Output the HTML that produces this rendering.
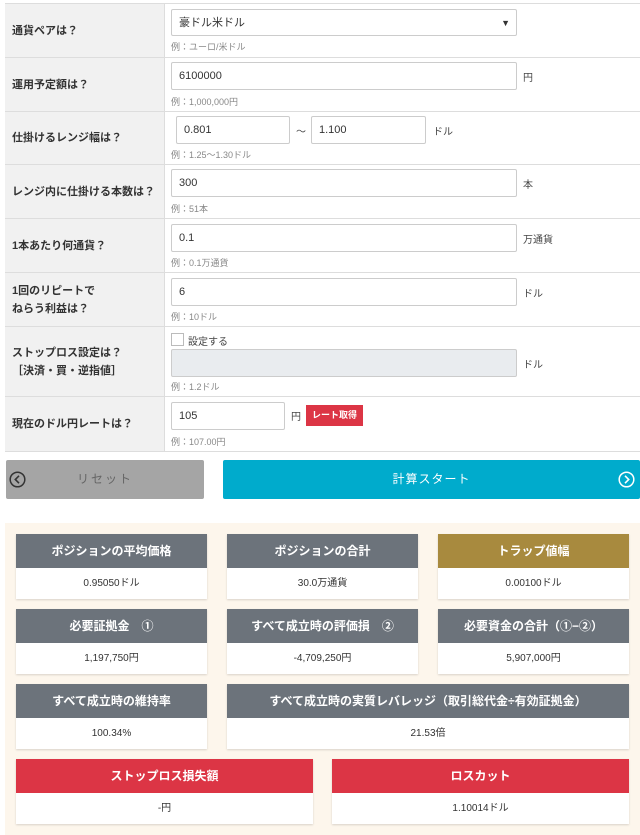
<!DOCTYPE html>
<html><head><meta charset="utf-8"><style>
*{box-sizing:border-box;margin:0;padding:0}
body{width:640px;height:835px;background:#fff;font-family:"Liberation Sans","Noto Sans CJK JP",sans-serif;color:#333;position:relative;overflow:hidden}
.a{position:absolute}
.lab{position:absolute;left:5px;width:159px;background:#f1f1f1;border-bottom:1px solid #ddd;border-top:1px solid #ddd;font-size:11px;font-weight:bold;color:#333;display:flex;align-items:center;padding-left:7px;line-height:18px}
.cell{position:absolute;left:164px;width:476px;border-bottom:1px solid #ddd;border-top:1px solid #ddd;border-left:1px solid #ddd}
.in{position:absolute;height:28px;border:1px solid #ccc;background:#fff;font-size:11px;padding-left:7px;line-height:26px;color:#333;border-radius:2px}
.hint{position:absolute;font-size:9px;color:#888}
.unit{position:absolute;font-size:10px;color:#444}
.card{position:absolute;background:#fff;box-shadow:0 1px 2px rgba(0,0,0,.15)}
.card .h{height:34px;background:#6c737b;color:#fff;font-weight:bold;font-size:12px;text-align:center;line-height:34px}
.card .v{height:31px;text-align:center;font-size:10px;line-height:31px;color:#333}
</style></head><body>
<div class="lab" style="top:3px;height:55px">通貨ペアは？</div>
<div class="cell" style="top:3px;height:55px"><div class="in" style="left:6px;top:5px;width:346px;height:27px">豪ドル米ドル<span style="position:absolute;right:6px;font-size:9px">▼</span></div><div class="hint" style="left:6px;top:36px">例：ユーロ/米ドル</div></div>
<div class="lab" style="top:57px;height:55px">運用予定額は？</div>
<div class="cell" style="top:57px;height:55px"><div class="in" style="left:6px;top:4px;width:346px">6100000</div><div class="unit" style="left:358px;top:11px">円</div><div class="hint" style="left:6px;top:37px">例：1,000,000円</div></div>
<div class="lab" style="top:111px;height:54px">仕掛けるレンジ幅は？</div>
<div class="cell" style="top:111px;height:54px"><div class="in" style="left:11px;top:4px;width:114px">0.801</div><div class="unit" style="left:131px;top:11px">〜</div><div class="in" style="left:146px;top:4px;width:115px">1.100</div><div class="unit" style="left:268px;top:11px">ドル</div><div class="hint" style="left:6px;top:36px">例：1.25〜1.30ドル</div></div>
<div class="lab" style="top:164px;height:55px">レンジ内に仕掛ける本数は？</div>
<div class="cell" style="top:164px;height:55px"><div class="in" style="left:6px;top:4px;width:346px">300</div><div class="unit" style="left:358px;top:11px">本</div><div class="hint" style="left:6px;top:37px">例：51本</div></div>
<div class="lab" style="top:218px;height:55px">1本あたり何通貨？</div>
<div class="cell" style="top:218px;height:55px"><div class="in" style="left:6px;top:5px;width:346px">0.1</div><div class="unit" style="left:358px;top:12px">万通貨</div><div class="hint" style="left:6px;top:37px">例：0.1万通貨</div></div>
<div class="lab" style="top:272px;height:55px">1回のリピートで<br>ねらう利益は？</div>
<div class="cell" style="top:272px;height:55px"><div class="in" style="left:6px;top:5px;width:346px">6</div><div class="unit" style="left:358px;top:12px">ドル</div><div class="hint" style="left:6px;top:37px">例：10ドル</div></div>
<div class="lab" style="top:326px;height:71px">ストップロス設定は？<br>［決済・買・逆指値］</div>
<div class="cell" style="top:326px;height:71px"><div class="a" style="left:6px;top:6px;width:13px;height:13px;border:1px solid #bbb"></div><div class="unit" style="left:23px;top:6px;font-size:10px">設定する</div><div class="in" style="left:6px;top:22px;width:346px;background:#e9ecef;border-color:#ccc"></div><div class="unit" style="left:358px;top:29px">ドル</div><div class="hint" style="left:6px;top:53px">例：1.2ドル</div></div>
<div class="lab" style="top:396px;height:56px">現在のドル円レートは？</div>
<div class="cell" style="top:396px;height:56px"><div class="in" style="left:6px;top:5px;width:114px;height:28px">105</div><div class="unit" style="left:126px;top:11px">円</div><div class="a" style="left:141px;top:8px;width:57px;height:21px;background:#dc3545;color:#fff;font-size:9px;font-weight:bold;text-align:center;line-height:21px">レート取得</div><div class="hint" style="left:6px;top:38px">例：107.00円</div></div>

<div class="a" style="left:6px;top:460px;width:198px;height:39px;background:#a5a5a5;border-radius:2px;color:#666;font-size:12px;text-align:center;line-height:39px;letter-spacing:2px">リセット<svg class="a" style="left:3px;top:11px" width="17" height="17" viewBox="0 0 17 17"><circle cx="8.5" cy="8.5" r="7.3" fill="none" stroke="#333" stroke-width="1.5"/><path d="M10 4.8 6.3 8.5 10 12.2" fill="none" stroke="#333" stroke-width="1.6"/></svg></div>
<div class="a" style="left:223px;top:460px;width:417px;height:39px;background:#00abcc;border-radius:2px;color:#fff;font-size:12px;text-align:center;line-height:39px;letter-spacing:1px">計算スタート<svg class="a" style="left:395px;top:11px" width="17" height="17" viewBox="0 0 17 17"><circle cx="8.5" cy="8.5" r="7.3" fill="none" stroke="#fff" stroke-width="1.5"/><path d="M7 4.8 10.7 8.5 7 12.2" fill="none" stroke="#fff" stroke-width="1.6"/></svg></div>

<div class="a" style="left:5px;top:523px;width:635px;height:312px;background:#fdf6ec"></div>
<div class="card" style="left:16px;top:534px;width:191px"><div class="h">ポジションの平均価格</div><div class="v">0.95050ドル</div></div>
<div class="card" style="left:227px;top:534px;width:191px"><div class="h">ポジションの合計</div><div class="v">30.0万通貨</div></div>
<div class="card" style="left:438px;top:534px;width:191px"><div class="h" style="background:#a88a3e">トラップ値幅</div><div class="v">0.00100ドル</div></div>
<div class="card" style="left:16px;top:609px;width:191px"><div class="h">必要証拠金　①</div><div class="v">1,197,750円</div></div>
<div class="card" style="left:227px;top:609px;width:191px"><div class="h">すべて成立時の評価損　②</div><div class="v">-4,709,250円</div></div>
<div class="card" style="left:438px;top:609px;width:191px"><div class="h">必要資金の合計（①−②）</div><div class="v">5,907,000円</div></div>
<div class="card" style="left:16px;top:684px;width:191px"><div class="h">すべて成立時の維持率</div><div class="v">100.34%</div></div>
<div class="card" style="left:227px;top:684px;width:402px"><div class="h">すべて成立時の実質レバレッジ（取引総代金÷有効証拠金）</div><div class="v">21.53倍</div></div>
<div class="card" style="left:16px;top:759px;width:297px"><div class="h" style="background:#dc3545">ストップロス損失額</div><div class="v">-円</div></div>
<div class="card" style="left:332px;top:759px;width:297px"><div class="h" style="background:#dc3545">ロスカット</div><div class="v">1.10014ドル</div></div>
</body></html>
